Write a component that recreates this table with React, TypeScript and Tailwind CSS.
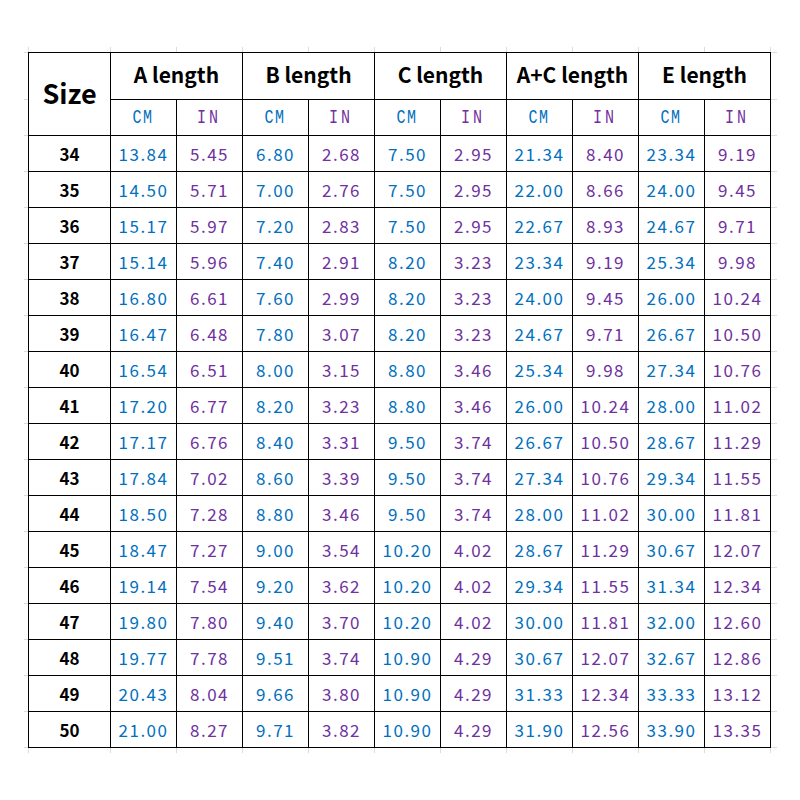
import React from "react";

const rows: [string, string[]][] = [
  ["34", ["13.84", "5.45", "6.80", "2.68", "7.50", "2.95", "21.34", "8.40", "23.34", "9.19"]],
  ["35", ["14.50", "5.71", "7.00", "2.76", "7.50", "2.95", "22.00", "8.66", "24.00", "9.45"]],
  ["36", ["15.17", "5.97", "7.20", "2.83", "7.50", "2.95", "22.67", "8.93", "24.67", "9.71"]],
  ["37", ["15.14", "5.96", "7.40", "2.91", "8.20", "3.23", "23.34", "9.19", "25.34", "9.98"]],
  ["38", ["16.80", "6.61", "7.60", "2.99", "8.20", "3.23", "24.00", "9.45", "26.00", "10.24"]],
  ["39", ["16.47", "6.48", "7.80", "3.07", "8.20", "3.23", "24.67", "9.71", "26.67", "10.50"]],
  ["40", ["16.54", "6.51", "8.00", "3.15", "8.80", "3.46", "25.34", "9.98", "27.34", "10.76"]],
  ["41", ["17.20", "6.77", "8.20", "3.23", "8.80", "3.46", "26.00", "10.24", "28.00", "11.02"]],
  ["42", ["17.17", "6.76", "8.40", "3.31", "9.50", "3.74", "26.67", "10.50", "28.67", "11.29"]],
  ["43", ["17.84", "7.02", "8.60", "3.39", "9.50", "3.74", "27.34", "10.76", "29.34", "11.55"]],
  ["44", ["18.50", "7.28", "8.80", "3.46", "9.50", "3.74", "28.00", "11.02", "30.00", "11.81"]],
  ["45", ["18.47", "7.27", "9.00", "3.54", "10.20", "4.02", "28.67", "11.29", "30.67", "12.07"]],
  ["46", ["19.14", "7.54", "9.20", "3.62", "10.20", "4.02", "29.34", "11.55", "31.34", "12.34"]],
  ["47", ["19.80", "7.80", "9.40", "3.70", "10.20", "4.02", "30.00", "11.81", "32.00", "12.60"]],
  ["48", ["19.77", "7.78", "9.51", "3.74", "10.90", "4.29", "30.67", "12.07", "32.67", "12.86"]],
  ["49", ["20.43", "8.04", "9.66", "3.80", "10.90", "4.29", "31.33", "12.34", "33.33", "13.12"]],
  ["50", ["21.00", "8.27", "9.71", "3.82", "10.90", "4.29", "31.90", "12.56", "33.90", "13.35"]],
];

const groups = ["A length", "B length", "C length", "A+C length", "E length"];

// row heights including the bottom border, for the faint side ticks
const rowHeights = [47, 36, ...rows.map(() => 36)];

const numFont = { fontFamily: '"Noto Sans CJK SC", "Noto Sans", sans-serif' };
const headFont = { fontFamily: '"Noto Sans CJK SC", "Noto Sans", sans-serif' };
const unitFont = { fontFamily: '"Liberation Mono", monospace' };

const SideTicks: React.FC = () => (
  <div className="flex flex-col">
    <div className="h-px bg-[#dcdcdc]" />
    {rowHeights.map((h, i) => (
      <div key={i} className="border-b border-[#dcdcdc]" style={{ height: h }} />
    ))}
  </div>
);

const TopTicks: React.FC = () => (
  <div className="flex h-[5px]">
    <div className="w-px bg-[#dcdcdc]" />
    <div className="w-[82px] border-r border-[#dcdcdc]" />
    {Array.from({ length: 10 }).map((_, i) => (
      <div key={i} className="w-[66px] border-r border-[#dcdcdc]" />
    ))}
  </div>
);

export default function App() {
  return (
    <div className="w-[800px] h-[800px] bg-white pt-[47px] pl-[24px]">
      <div className="grid grid-cols-[4px_743px_6px] grid-rows-[5px_696px_5px]">
        <div />
        <TopTicks />
        <div />

        <SideTicks />
        <div
          className="grid grid-cols-[82px_repeat(10,66px)] grid-rows-[47px_repeat(18,36px)] border-l border-t border-black text-black"
          style={headFont}
        >
          <div className="row-span-2 flex items-center justify-center border-r border-b border-black pb-[2px] text-[27px] font-bold">
            Size
          </div>
          {groups.map((g) => (
            <div
              key={g}
              className="col-span-2 flex items-center justify-center border-r border-b border-black pb-[3px] text-[21px] font-bold"
            >
              {g}
            </div>
          ))}
          {groups.map((g) => (
            <React.Fragment key={g + "-u"}>
              <div className="flex items-center justify-center border-r border-b border-black">
                <span className="inline-block scale-x-[0.75] text-[20px] tracking-[2px] text-[#0070c0]" style={unitFont}>
                  CM
                </span>
              </div>
              <div className="flex items-center justify-center border-r border-b border-black">
                <span className="inline-block scale-x-[0.75] text-[20px] tracking-[4px] text-[#7030a0]" style={unitFont}>
                  IN
                </span>
              </div>
            </React.Fragment>
          ))}
          {rows.map(([size, vals]) => (
            <React.Fragment key={size}>
              <div className="flex items-center justify-center border-r border-b border-black text-[17px] font-bold">
                {size}
              </div>
              {vals.map((v, i) => (
                <div
                  key={i}
                  className={`flex items-center justify-center border-r border-b border-black text-[17px] tracking-[1.5px] ${
                    i % 2 === 0 ? "text-[#0070c0]" : "text-[#7030a0]"
                  }`}
                  style={numFont}
                >
                  {v}
                </div>
              ))}
            </React.Fragment>
          ))}
        </div>
        <SideTicks />

        <div />
        <TopTicks />
        <div />
      </div>
    </div>
  );
}
